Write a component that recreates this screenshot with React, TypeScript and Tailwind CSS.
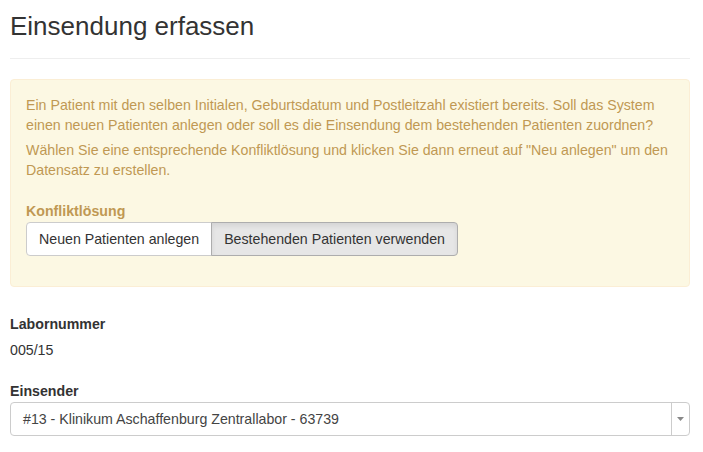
import React from 'react';

const App = () => {
  return (
    <div className="min-h-screen bg-white pl-[10px] pr-[13px] text-[14.2px] leading-[20px] text-[#333] font-['Liberation_Sans',Arial,sans-serif]">
      <div className="pt-[11px] pb-[17px] border-b border-[#eee]">
        <h1 className="text-[26px] leading-[30px] text-[#333]">Einsendung erfassen</h1>
      </div>

      <div className="mt-[20px] rounded-[4px] border border-[#fbeed5] bg-[#fcf8e3] p-[15px] text-[#c09853]">
        <p>
          Ein Patient mit den selben Initialen, Geburtsdatum und Postleitzahl existiert bereits. Soll das System
          einen neuen Patienten anlegen oder soll es die Einsendung dem bestehenden Patienten zuordnen?
        </p>
        <p className="mt-[5px]">
          Wählen Sie eine entsprechende Konfliktlösung und klicken Sie dann erneut auf "Neu anlegen" um den
          Datensatz zu erstellen.
        </p>
        <div className="mt-[21px] mb-[15px]">
          <label className="block mb-[1px] font-bold">Konfliktlösung</label>
          <div className="flex">
            <button className="h-[34px] px-[12px] rounded-l-[4px] border border-[#ccc] bg-white text-[#333]">
              Neuen Patienten anlegen
            </button>
            <button className="h-[34px] px-[12px] -ml-px rounded-r-[4px] border border-[#adadad] bg-[#e6e6e6] text-[#333] shadow-[inset_0_3px_5px_rgba(0,0,0,0.08)]">
              Bestehenden Patienten verwenden
            </button>
          </div>
        </div>
      </div>

      <div className="mt-[27px]">
        <label className="block mb-[1px] font-bold">Labornummer</label>
        <p className="pt-[5px] pb-[7px]">005/15</p>
      </div>

      <div className="mt-[14px]">
        <label className="block mb-[1px] font-bold">Einsender</label>
        <div className="flex h-[34px] items-center rounded-[4px] border border-[#ccc] bg-white">
          <span className="flex-1 pl-[12px] text-[#444]">#13 - Klinikum Aschaffenburg Zentrallabor - 63739</span>
          <span className="flex h-full w-[18px] items-center justify-center border-l border-[#ccc]">
            <svg width="7" height="4" viewBox="0 0 7 4">
              <path d="M0 0h7L3.5 4z" fill="#888" />
            </svg>
          </span>
        </div>
      </div>
    </div>
  );
};

export default App;
